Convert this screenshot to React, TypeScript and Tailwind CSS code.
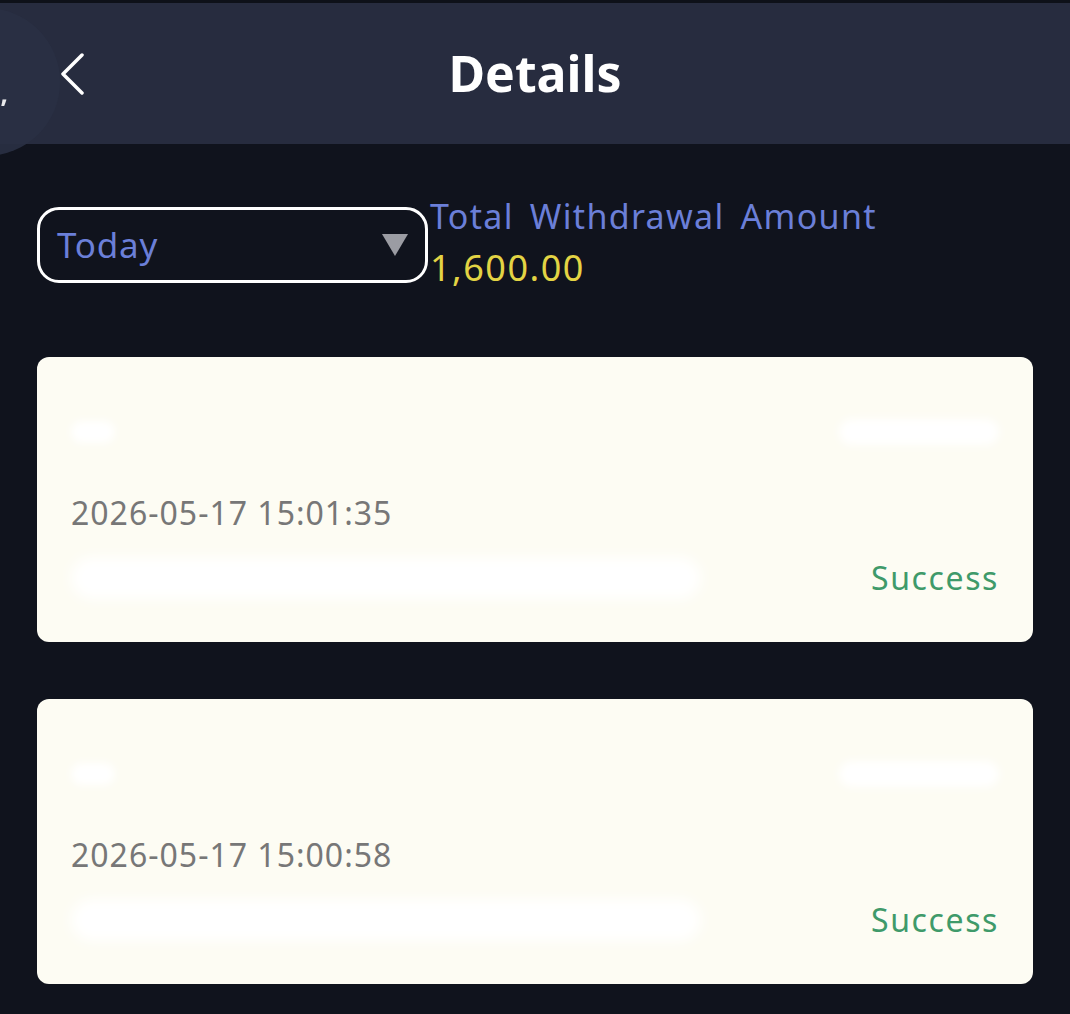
import React from "react";

function Card({ date }: { date: string }) {
  return (
    <div className="rounded-[12px] bg-[#fdfcf3] h-[285px] px-[34px] pt-[58px] flex flex-col">
      <div className="flex justify-between items-center h-[34px]">
        <div className="w-[44px] h-[22px] rounded-full bg-white blur-[4px]" />
        <div className="w-[160px] h-[26px] rounded-full bg-white blur-[5px]" />
      </div>
      <div className="mt-[44px] text-[32px] leading-[40px] text-[#777777] tracking-[1px]">{date}</div>
      <div className="mt-[24px] flex justify-between items-center">
        <div className="w-[630px] h-[42px] rounded-full bg-white blur-[7px]" />
        <div className="text-[32px] leading-[40px] text-[#3f9a6a] tracking-[1.6px]">Success</div>
      </div>
    </div>
  );
}

export default function App() {
  return (
    <div
      className="relative w-[1070px] h-[1014px] overflow-hidden bg-[#10131d]"
      style={{ fontFamily: '"Noto Sans", "Open Sans", sans-serif' }}
    >
      <div className="h-[3px] bg-[#0e1119]" />
      <div className="h-[141px] bg-[#272c3f] flex items-center justify-center relative">
        <div className="absolute left-[58px] top-[48px]">
          <svg width="28" height="44" viewBox="0 0 28 44">
            <path d="M24 4 L5 23 L24 42" fill="none" stroke="#ffffff" strokeWidth="3.5" strokeLinecap="round" strokeLinejoin="round" />
          </svg>
        </div>
        <div className="text-white font-bold text-[50px] leading-none -mt-[2px]">Details</div>
      </div>
      <div className="absolute left-[-98px] top-[8px] w-[158px] h-[148px] rounded-full bg-[#2a3044] opacity-90">
        <div className="absolute right-[52px] top-[66px] text-white text-[26px] font-bold">,</div>
      </div>

      <div className="px-[37px] pt-[56px] flex items-start">
        <div className="mt-[7px] w-[391px] h-[76px] rounded-[22px] border-[3px] border-white flex items-center justify-between pl-[17px] pr-[16px]">
          <span className="text-[#6b7fd8] text-[35px] leading-none -mt-[2px] tracking-[0.8px]">Today</span>
          <svg width="28" height="24" viewBox="0 0 28 24">
            <path d="M1 1 L27 1 L14 23 Z" fill="#9b9ca3" />
          </svg>
        </div>
        <div className="ml-[2px] -mt-[4px] flex flex-col">
          <div className="text-[#6b7fd8] text-[34px] leading-[40px] tracking-[1.3px] [word-spacing:6px]">Total Withdrawal Amount</div>
          <div className="text-[#e3d444] text-[36px] leading-[40px] mt-[12px] tracking-[1.5px]">1,600.00</div>
        </div>
      </div>

      <div className="px-[37px] pt-[69px] flex flex-col gap-[57px]">
        <Card date="2026-05-17 15:01:35" />
        <Card date="2026-05-17 15:00:58" />
      </div>
    </div>
  );
}
